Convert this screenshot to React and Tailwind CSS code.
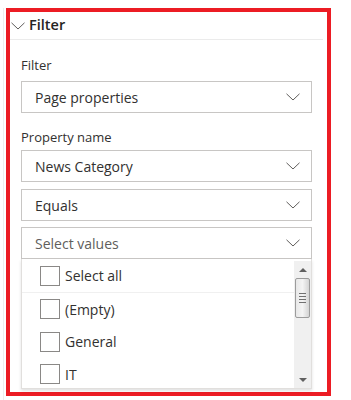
function Chevron({ className }) {
  return (
    <svg width="14" height="8" viewBox="0 0 14 8" className={className}>
      <path d="M0.5 0.8 L7 7 L13.5 0.8" fill="none" stroke="currentColor" strokeWidth="1" />
    </svg>
  );
}

function Dropdown({ value, placeholder, className = '' }) {
  return (
    <div
      className={`h-[32px] flex items-center justify-between border border-[#c8c6c4] bg-white pl-[13px] pr-[11px] ${className}`}
    >
      <span className={`text-[14px] ${placeholder ? 'text-[#605e5c]' : 'text-[#323130]'}`}>
        {value}
      </span>
      <Chevron className="text-[#605e5c]" />
    </div>
  );
}

function Option({ label, divider }) {
  return (
    <div
      className={`flex items-center shrink-0 pl-[18px] ${
        divider ? 'h-[34px] border-b border-[#f0f0f0]' : 'h-[32.5px]'
      }`}
    >
      <span className="w-[20px] h-[20px] border border-[#8a8886] bg-white" />
      <span className="ml-[5px] text-[14px] text-[#323130]">{label}</span>
    </div>
  );
}

function Scrollbar() {
  return (
    <div className="absolute right-0 top-[2px] bottom-0 w-[17px] bg-[#f0f0f0] flex flex-col items-center">
      <div className="h-[17px] flex items-center justify-center">
        <span className="w-0 h-0 border-l-[4px] border-r-[4px] border-b-[4px] border-l-transparent border-r-transparent border-b-[#606060]" />
      </div>
      <div className="w-[15px] h-[40px] border border-[#9c9c9c] rounded-[2px] bg-gradient-to-r from-[#e8e8e8] via-[#f4f4f4] to-[#d4d4d4] flex flex-col items-center justify-center gap-[2px]">
        <span className="w-[7px] h-px bg-[#707070]" />
        <span className="w-[7px] h-px bg-[#707070]" />
        <span className="w-[7px] h-px bg-[#707070]" />
        <span className="w-[7px] h-px bg-[#707070]" />
      </div>
      <div className="flex-1" />
      <div className="h-[17px] flex items-center justify-center">
        <span className="w-0 h-0 border-l-[4px] border-r-[4px] border-t-[4px] border-l-transparent border-r-transparent border-t-[#606060]" />
      </div>
    </div>
  );
}

export default function App() {
  return (
    <div className="w-[351px] h-[400px] bg-white pt-[8px] pl-[3px] font-['Segoe_UI','Open_Sans',sans-serif] overflow-hidden">
      <div className="h-[392px] pl-[3px] border-l border-[#eeeeee]">
        <div className="relative -ml-[1px] w-[325px] h-[388px] border-4 border-[#ec1c24]">
          {/* header */}
          <div className="h-[28px] mr-[4px] flex items-center border-b border-[#ebebeb]">
            <Chevron className="ml-[1px] text-[#605e5c]" />
            <span className="ml-[4px] text-[14.5px] font-semibold text-[#252423] leading-none">Filter</span>
          </div>

          <div className="pl-[11px] pr-[15px]">
            <div className="mt-[15px] h-[20px] text-[13px] leading-5 text-[#323130]">Filter</div>
            <Dropdown value="Page properties" className="mt-[6px]" />

            <div className="mt-[14px] h-[20px] text-[13px] leading-5 text-[#323130]">Property name</div>
            <Dropdown value="News Category" className="mt-[3px]" />
            <Dropdown value="Equals" className="mt-[7px]" />
            <Dropdown value="Select values" placeholder className="mt-[6px]" />

            <div className="relative h-[130px] bg-white border-x border-b border-[#e1dfdd] shadow-[0_2px_3px_rgba(0,0,0,0.12)] overflow-hidden flex flex-col pr-[17px]">
              <Option label="Select all" divider />
              <Option label="(Empty)" />
              <Option label="General" />
              <Option label="IT" />
              <Scrollbar />
            </div>
          </div>
        </div>
      </div>
    </div>
  );
}
